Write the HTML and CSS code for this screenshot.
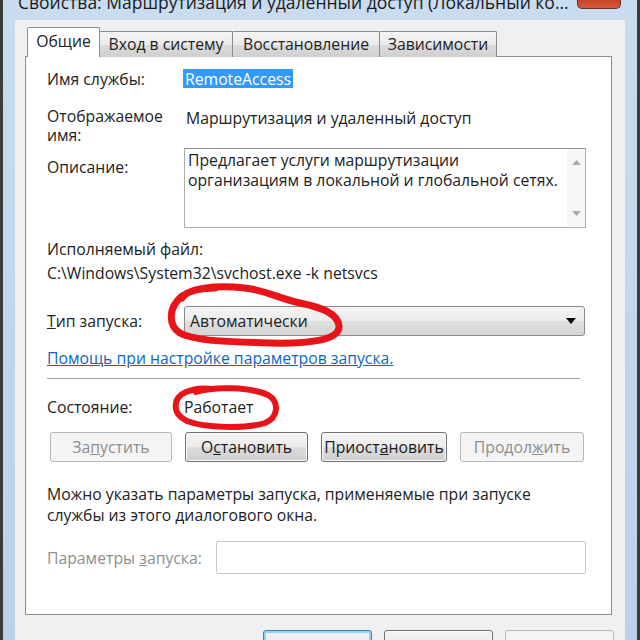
FILE: index.html
```html
<!DOCTYPE html>
<html lang="ru">
<head>
    <meta charset="UTF-8">
    <title>Свойства: Маршрутизация и удаленный доступ</title>
    <link rel="stylesheet" href="styles.css">
</head>
<body>

    <div class="window">
        <div class="titlebar">
            <span class="title">Свойства: Маршрутизация и удаленный доступ (Локальный ко...</span>
            <span class="close-btn">
                <svg viewBox="0 0 44 21" width="44" height="21">
                    <path d="M16 -4 L28 8 M28 -4 L16 8" stroke="#fff" stroke-width="3" fill="none"/>
                </svg>
            </span>
        </div>

        <div class="client">
            <!-- вкладки -->
            <div class="tabs">
                <div class="tab active">Общие</div>
                <div class="tab tab-logon">Вход в систему</div>
                <div class="tab tab-recovery">Восстановление</div>
                <div class="tab tab-deps">Зависимости</div>
            </div>

            <div class="panel">
                <div class="row row-name">
                    <span class="label">Имя службы:</span>
                    <span class="value"><span class="selected">RemoteAccess</span></span>
                </div>

                <div class="row row-display">
                    <span class="label">Отображаемое<br>имя:</span>
                    <span class="value">Маршрутизация и удаленный доступ</span>
                </div>

                <div class="row row-desc">
                    <span class="label">Описание:</span>
                    <div class="textarea">
                        <div class="textarea-text">Предлагает услуги маршрутизации<br>организациям в локальной и глобальной сетях.</div>
                        <div class="scrollbar">
                            <svg viewBox="0 0 9 5" width="9" height="5"><path d="M0 5 L4.5 0 L9 5 Z" fill="#a9a9a9"/></svg>
                            <svg viewBox="0 0 9 5" width="9" height="5"><path d="M0 0 L4.5 5 L9 0 Z" fill="#a9a9a9"/></svg>
                        </div>
                    </div>
                </div>

                <div class="line exe-label">Исполняемый файл:</div>
                <div class="line exe-path">C:\Windows\System32\svchost.exe -k netsvcs</div>

                <div class="row row-startup">
                    <span class="label"><u>Т</u>ип запуска:</span>
                    <div class="select">
                        <span>Автоматически</span>
                        <svg viewBox="0 0 10 6" width="10" height="6"><path d="M0 0 L10 0 L5 6 Z" fill="#000"/></svg>
                    </div>
                </div>

                <a class="line help-link" href="#">Помощь при настройке параметров запуска.</a>

                <div class="separator"></div>

                <div class="row row-state">
                    <span class="label">Состояние:</span>
                    <span class="value">Работает</span>
                </div>

                <div class="service-buttons">
                    <button class="btn btn-start" disabled>За<u>п</u>устить</button>
                    <button class="btn btn-stop">О<u>с</u>тановить</button>
                    <button class="btn btn-pause">Приост<u>а</u>новить</button>
                    <button class="btn btn-resume" disabled>Продол<u>ж</u>ить</button>
                </div>

                <p class="hint">Можно указать параметры запуска, применяемые при запуске<br>службы из этого диалогового окна.</p>

                <div class="row row-params">
                    <span class="label disabled">Параметры <u>з</u>апуска:</span>
                    <div class="input"></div>
                </div>
            </div>

            <div class="dialog-buttons">
                <button class="btn btn-ok">OK</button>
                <button class="btn btn-cancel">Отмена</button>
                <button class="btn btn-apply" disabled>Применить</button>
            </div>
        </div>
    </div>

    <!-- красные пометки маркером поверх окна -->
    <svg class="marks" viewBox="0 0 640 640" width="640" height="640">
        <path d="M182 298 C188 288 215 285 245 288 C265 290 280 299 300 303 C320 307 338 313 339 326 C340 340 310 344 270 343 C230 342 195 341 180 333 C168 325 168 308 182 296 C192 289 205 288 215 288"
              stroke="#e8141a" stroke-width="7" fill="none" stroke-linecap="round"/>
        <path d="M196 392 C215 386 250 387 268 395 C280 402 278 418 265 423 C245 429 205 428 187 421 C172 414 172 398 186 392 C195 388 205 388 212 389"
              stroke="#e8141a" stroke-width="6" fill="none" stroke-linecap="round"/>
    </svg>

</body>
</html>
```

FILE: styles.css
```css
/* базовые */
body {
    margin: 0;
    width: 640px;
    height: 640px;
    overflow: hidden;
    position: relative;
    background: #bcd4ec;
    font-family: "Open Sans", "Noto Sans", sans-serif;
    font-size: 15.75px;
    color: #222;
}

/* окно */
.window {
    margin-top: -12px;
    height: 680px;
    border-left: 3px solid #3b3b3b;
    border-right: 3px solid #3b3b3b;
    padding: 0 12px;
    background: linear-gradient(180deg, #c9dcf0 0%, #b9d1ea 100%);
}

.titlebar {
    height: 32px;
    display: flex;
    align-items: flex-start;
}

.title {
    flex: 1;
    min-width: 0;
    overflow: hidden;
    margin-top: 3px;
    padding-left: 3px;
    font-size: 17.5px;
    line-height: 22px;
    color: #1a1a1a;
    white-space: nowrap;
}

.close-btn {
    flex: 0 0 44px;
    margin-left: 8px;
    margin-right: 4px;
    height: 21px;
    box-sizing: border-box;
    border: 1px solid #6b2f24;
    border-top: none;
    border-radius: 0 0 5px 5px;
    background: linear-gradient(180deg, #d9826b 0%, #c8442a 60%, #d35b3e 100%);
    overflow: hidden;
}

.close-btn svg {
    display: block;
    margin-left: -1px;
}

.client {
    background: #f0f0f0;
    height: 648px;
    padding: 7px 13px 0 10px;
}

/* вкладки */
.tabs {
    display: flex;
    align-items: flex-end;
    padding-left: 2px;
    height: 30px;
    margin-bottom: -1px;
}

.tab {
    box-sizing: border-box;
    height: 26px;
    line-height: 24px;
    text-align: center;
    border: 1px solid #898c95;
    border-bottom: none;
    margin-left: -1px;
    background: linear-gradient(180deg, #f5f5f5 0%, #ebebeb 50%, #dddddd 51%, #cfcfcf 100%);
    border-radius: 2px 2px 0 0;
}

.tab.active {
    position: relative;
    z-index: 1;
    margin-left: 0;
    width: 73px;
    height: 30px;
    line-height: 27px;
    background: #fff;
}

.tab-logon { width: 134px; }
.tab-recovery { width: 148px; }
.tab-deps { width: 118px; }

/* панель */
.panel {
    background: #fff;
    border: 1px solid #898c95;
    padding: 12px 25px 40px 21px;
}

.row {
    display: flex;
    align-items: flex-start;
    line-height: 20px;
}

.label {
    flex: 0 0 137px;
}

.label.disabled {
    color: #8f8f8f;
    flex: 0 0 auto;
}

.selected {
    display: inline-block;
    margin-left: -1px;
    padding: 0 2px;
    height: 19px;
    background: #3399ff;
    color: #fff;
}

.row-display {
    margin-top: 18px;
    line-height: 19px;
}

.row-display .value {
    margin-top: 2px;
    padding-left: 2px;
}

.row-desc {
    margin-top: 3px;
}

.row-desc .label {
    margin-top: 9px;
}

.textarea {
    flex: 0 0 402px;
    height: 80px;
    box-sizing: border-box;
    border: 1px solid #abadb3;
    border-top-color: #8e9094;
    display: flex;
}

.textarea-text {
    flex: 1;
    padding: 1px 4px 0 3px;
    line-height: 20px;
    white-space: nowrap;
}

.scrollbar {
    flex: 0 0 18px;
    background: #f7f7f7;
    display: flex;
    flex-direction: column;
    justify-content: space-between;
    align-items: center;
    padding: 11px 0 11px;
}

.line {
    display: block;
    line-height: 20px;
}

.exe-label {
    margin-top: 11px;
}

.exe-path {
    margin-top: 4px;
}

.row-startup {
    margin-top: 23px;
    align-items: center;
}

.select {
    flex: 0 0 401px;
    height: 30px;
    box-sizing: border-box;
    border: 1px solid #8a8a8a;
    border-radius: 3px;
    background: linear-gradient(180deg, #f4f4f4 0%, #ececec 50%, #dfdfdf 51%, #d5d5d5 100%);
    display: flex;
    align-items: center;
    justify-content: space-between;
    padding: 0 8px 0 5px;
}

.help-link {
    margin-top: 12px;
    color: #0f66c0;
}

.separator {
    margin-top: 10px;
    width: 533px;
    height: 1px;
    background: #a0a0a0;
}

.row-state {
    margin-top: 18px;
}

/* кнопки */
.btn {
    font-family: inherit;
    font-size: 15.75px;
    color: #1a1a1a;
    height: 30px;
    box-sizing: border-box;
    padding: 0;
    border: 1px solid #707070;
    border-radius: 3px;
    background: linear-gradient(180deg, #f3f3f3 0%, #ebebeb 50%, #dddddd 51%, #cfcfcf 100%);
    box-shadow: inset 0 0 0 1px #fbfbfb;
}

.btn:disabled {
    color: #8d8d8d;
    border-color: #b8b8b8;
    background: #f4f4f4;
    box-shadow: none;
}

.service-buttons {
    margin-top: 15px;
    margin-left: 3px;
    display: flex;
    gap: 13px;
}

.btn-start { width: 122px; }
.btn-stop { width: 123px; }
.btn-pause { width: 126px; }
.btn-resume { width: 124px; }

.hint {
    margin: 22px 0 0;
    line-height: 21px;
}

.row-params {
    margin-top: 15px;
    align-items: center;
}

.input {
    margin-left: auto;
    flex: 0 0 370px;
    height: 33px;
    box-sizing: border-box;
    border: 1px solid #c9c9c9;
    border-radius: 2px;
    background: #fff;
}

.dialog-buttons {
    margin-top: 15px;
    margin-right: -2px;
    display: flex;
    justify-content: flex-end;
    gap: 12px;
}

.dialog-buttons .btn {
    width: 109px;
    height: 30px;
    line-height: 24px;
    padding-top: 2px;
}

.btn-ok {
    border-color: #3c7fb1;
    box-shadow: inset 0 0 0 2px #8fd4f6;
}

.btn-cancel { width: 110px; }

/* пометки */
.marks {
    position: absolute;
    left: 0;
    top: 0;
    pointer-events: none;
}
```
